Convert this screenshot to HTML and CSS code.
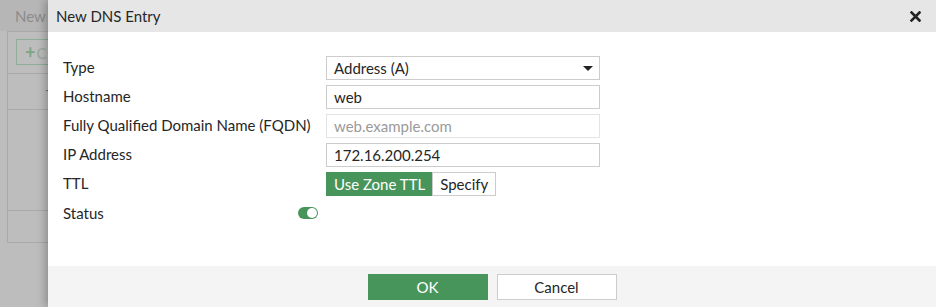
FILE: index.html
```html
<!DOCTYPE html>
<html lang="en">
<head>
    <meta charset="UTF-8">
    <meta name="viewport" content="width=device-width, initial-scale=1.0">
    <title>New DNS Entry</title>
    <link rel="stylesheet" href="styles.css">
</head>
<body>

    <!-- Pagina de fondo (tapada por el modal) -->
    <div class="page">
        <div class="page-bar">New</div>
        <div class="page-box">
            <div class="page-toolbar">
                <span class="page-btn"><span class="plus">+</span>C</span>
            </div>
            <div class="page-head"><span class="dash">-</span></div>
            <div class="page-rows"></div>
            <div class="page-foot"></div>
        </div>
    </div>

    <!-- Ventana emergente -->
    <div class="dialog">
        <div class="dialog-header">
            <span class="dialog-title">New DNS Entry</span>
            <svg class="close" width="11" height="11" viewBox="0 0 11 11">
                <path d="M1.5 1.5 L9.5 9.5 M9.5 1.5 L1.5 9.5" stroke="#222" stroke-width="2.6" stroke-linecap="square"/>
            </svg>
        </div>
        <div class="dialog-body">
            <div class="row">
                <label class="label">Type</label>
                <div class="select">
                    <span>Address (A)</span>
                    <span class="caret"></span>
                </div>
            </div>
            <div class="row">
                <label class="label">Hostname</label>
                <input class="input" type="text" value="web">
            </div>
            <div class="row">
                <label class="label">Fully Qualified Domain Name (FQDN)</label>
                <input class="input disabled" type="text" placeholder="web.example.com" disabled>
            </div>
            <div class="row">
                <label class="label">IP Address</label>
                <input class="input" type="text" value="172.16.200.254">
            </div>
            <div class="row">
                <label class="label">TTL</label>
                <div class="btn-group">
                    <span class="seg active">Use Zone TTL</span>
                    <span class="seg">Specify</span>
                </div>
            </div>
            <div class="row">
                <label class="label label-toggle">Status <span class="toggle"><span class="knob"></span></span></label>
            </div>
        </div>
        <div class="dialog-footer">
            <button class="button primary">OK</button>
            <button class="button">Cancel</button>
        </div>
    </div>

</body>
</html>
```

FILE: styles.css
```css
/* Estilos generales */
body {
    margin: 0;
    width: 936px;
    height: 307px;
    overflow: hidden;
    background-color: #bdbdbd;
    font-family: Lato, "Open Sans", sans-serif;
    font-size: 15px;
    color: #262626;
    position: relative;
}

/* Pagina de fondo */
.page-bar {
    height: 31px;
    line-height: 32px;
    padding-left: 15px;
    background-color: #b6b6b6;
    color: #8c8c8c;
    font-size: 15px;
}
.page-box {
    margin-left: 7px;
    width: 200px;
    height: 212px;
    border: 1px solid #a9a9a9;
    border-right: none;
    box-sizing: border-box;
}
.page-toolbar {
    height: 42px;
    padding: 7px 0 0 8px;
    box-sizing: border-box;
    border-bottom: 1px solid #a9a9a9;
}
.page-btn {
    display: inline-block;
    width: 40px;
    height: 26px;
    line-height: 25px;
    border: 1px solid #8fae95;
    box-sizing: border-box;
    padding-left: 8px;
    color: #9aa89c;
    font-size: 15px;
}
.plus {
    color: #7ba583;
    font-weight: bold;
    font-size: 18px;
    margin-right: 1px;
}
.page-head {
    height: 35px;
    border-bottom: 1px solid #a9a9a9;
}
.dash {
    display: inline-block;
    margin: 6px 0 0 37px;
    color: #777;
}
.page-rows {
    height: 100px;
    border-bottom: 1px solid #a9a9a9;
}

/* Ventana emergente */
.dialog {
    position: absolute;
    left: 48px;
    top: 0;
    width: 888px;
    height: 307px;
    background-color: white;
    box-shadow: -3px 0 8px rgba(0,0,0,0.25);
    display: flex;
    flex-direction: column;
}
.dialog-header {
    height: 32px;
    background-color: #e6e6e6;
    display: flex;
    align-items: center;
    justify-content: space-between;
    padding: 0 15px 0 8px;
}
.dialog-title {
    font-size: 15px;
    color: #262626;
}
.close {
    display: block;
}
.dialog-body {
    flex: 1;
    padding: 24px 0 0 15px;
    display: flex;
    flex-direction: column;
    gap: 5px;
}
.row {
    display: flex;
    align-items: center;
    height: 24px;
}
.label {
    width: 263px;
    flex: none;
    font-size: 15px;
    color: #262626;
    margin-top: -2px;
}
.label-toggle {
    display: flex;
    justify-content: space-between;
    align-items: center;
    padding-right: 8px;
    box-sizing: border-box;
    margin-top: -1px;
}
.select, .input {
    width: 274px;
    height: 24px;
    box-sizing: border-box;
    border: 1px solid #cccccc;
    background-color: white;
    font-family: Lato, "Open Sans", sans-serif;
    font-size: 15px;
    color: #262626;
    padding: 0 7px;
    margin: 0;
}
.select {
    display: flex;
    align-items: center;
    justify-content: space-between;
    padding-right: 6px;
}
.caret {
    width: 0;
    height: 0;
    border-left: 5px solid transparent;
    border-right: 5px solid transparent;
    border-top: 5px solid #222;
    margin-top: 1px;
}
.input.disabled {
    border-color: #e3e3e3;
}
.input.disabled::placeholder {
    color: #9a9a9a;
}
.btn-group {
    display: flex;
    height: 24px;
}
.seg {
    display: flex;
    align-items: center;
    padding: 0 7px;
    border: 1px solid #cccccc;
    box-sizing: border-box;
    background-color: white;
    color: #262626;
}
.seg.active {
    background-color: #48955b;
    border-color: #48955b;
    color: white;
    padding: 0 6px 0 7px;
}

/* Interruptor */
.toggle {
    width: 20px;
    height: 12px;
    border-radius: 6px;
    background-color: #48955b;
    position: relative;
}
.knob {
    position: absolute;
    right: 1px;
    top: 1px;
    width: 10px;
    height: 10px;
    border-radius: 50%;
    background-color: white;
}

/* Pie del dialogo */
.dialog-footer {
    height: 41px;
    background-color: #f4f4f4;
    display: flex;
    justify-content: center;
    align-items: flex-start;
    gap: 9px;
    padding-top: 8px;
    box-sizing: border-box;
}
.button {
    width: 120px;
    height: 26px;
    border: 1px solid #cccccc;
    background-color: white;
    font-family: Lato, "Open Sans", sans-serif;
    font-size: 15px;
    color: #262626;
    padding: 0;
    cursor: pointer;
}
.button.primary {
    background-color: #48955b;
    border-color: #48955b;
    color: white;
}
```
